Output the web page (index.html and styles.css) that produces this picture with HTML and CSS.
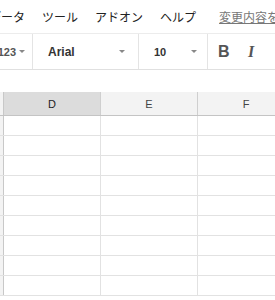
FILE: index.html
```html
<!DOCTYPE html>
<html lang="ja">
<head>
  <meta charset="UTF-8" />
  <title>スプレッドシート</title>
  <link rel="stylesheet" href="styles.css">
</head>
<body>
  <div class="menubar">
    <span class="menu-item">データ</span>
    <span class="menu-item">ツール</span>
    <span class="menu-item">アドオン</span>
    <span class="menu-item">ヘルプ</span>
    <span class="save-note">変更内容をすべてドライブに保存しました</span>
  </div>

  <div class="toolbar">
    <div class="tool tool-format">123 <span class="caret"></span></div>
    <div class="tool tool-font">Arial <span class="caret"></span></div>
    <div class="tool tool-size">10 <span class="caret"></span></div>
    <div class="tool tool-style">
      <span class="btn-bold">B</span>
      <span class="btn-italic">I</span>
    </div>
  </div>

  <div class="formula-bar"></div>

  <div class="sheet">
    <div class="row header-row">
      <div class="cell corner"></div>
      <div class="cell col-head selected">D</div>
      <div class="cell col-head">E</div>
      <div class="cell col-head">F</div>
    </div>
    <div class="row"><div class="cell corner"></div><div class="cell"></div><div class="cell"></div><div class="cell"></div></div>
    <div class="row"><div class="cell corner"></div><div class="cell"></div><div class="cell"></div><div class="cell"></div></div>
    <div class="row"><div class="cell corner"></div><div class="cell"></div><div class="cell"></div><div class="cell"></div></div>
    <div class="row"><div class="cell corner"></div><div class="cell"></div><div class="cell"></div><div class="cell"></div></div>
    <div class="row"><div class="cell corner"></div><div class="cell"></div><div class="cell"></div><div class="cell"></div></div>
    <div class="row"><div class="cell corner"></div><div class="cell"></div><div class="cell"></div><div class="cell"></div></div>
    <div class="row"><div class="cell corner"></div><div class="cell"></div><div class="cell"></div><div class="cell"></div></div>
    <div class="row"><div class="cell corner"></div><div class="cell"></div><div class="cell"></div><div class="cell"></div></div>
    <div class="row"><div class="cell corner"></div><div class="cell"></div><div class="cell"></div><div class="cell"></div></div>
  </div>
</body>
</html>
```

FILE: styles.css
```css
body {
  margin: 0;
  padding: 0;
  background: #fff;
  color: #222;
  font-family: "Liberation Sans", "Noto Sans CJK JP", sans-serif;
  overflow: hidden;
  width: 275px;
  height: 300px;
}

.menubar {
  height: 33px;
  display: flex;
  align-items: center;
  white-space: nowrap;
  margin-left: -11px;
  font-family: "Noto Sans CJK JP", sans-serif;
  font-size: 12px;
  color: #222;
}

.menu-item {
  margin-right: 17px;
}

.save-note {
  margin-left: 6px;
  color: #777;
  text-decoration: underline;
}

.toolbar {
  height: 35px;
  display: flex;
  border-top: 1px solid #ececec;
  border-bottom: 1px solid #e0e0e0;
  background: #fff;
  font-size: 12px;
  color: #444;
}

.tool {
  display: flex;
  align-items: center;
  border-right: 1px solid #e4e4e4;
}

.tool-format {
  width: 32px;
  margin-left: -7px;
  justify-content: flex-end;
  padding-right: 7px;
  font-weight: bold;
  font-size: 11px;
  color: #555;
}

.tool-font {
  box-sizing: border-box;
  width: 106px;
  padding-left: 15px;
  font-weight: bold;
  color: #333;
}

.tool-font .caret {
  margin-left: auto;
  margin-right: 13px;
}

.tool-size {
  width: 69px;
  box-sizing: border-box;
  padding-left: 15px;
  font-size: 11px;
  font-weight: bold;
  color: #333;
}

.tool-size .caret {
  margin-left: auto;
  margin-right: 10px;
}

.tool-format .caret {
  margin-left: 3px;
}

.caret {
  width: 0;
  height: 0;
  border-left: 3px solid transparent;
  border-right: 3px solid transparent;
  border-top: 3px solid #888;
}

.tool-style {
  border-right: none;
  padding-left: 10px;
  font-size: 16px;
  font-weight: bold;
  color: #555;
}

.btn-bold {
  width: 12px;
}

.btn-italic {
  margin-left: 18px;
  font-family: "Liberation Serif", serif;
  font-style: italic;
  font-size: 16px;
  text-decoration: underline;
  text-decoration-thickness: 2px;
  text-underline-offset: -1px;
}

.formula-bar {
  height: 22px;
}

.sheet {
  display: flex;
  flex-direction: column;
}

.row {
  display: flex;
  box-sizing: border-box;
  height: 20px;
  border-bottom: 1px solid #e2e2e2;
}

.header-row {
  height: 24px;
  border-bottom: 1px solid #c4c4c4;
}

.cell {
  width: 97px;
  border-right: 1px solid #e2e2e2;
  box-sizing: border-box;
  flex-shrink: 0;
}

.corner {
  width: 4px;
  background: #f3f3f3;
  border-right: 1px solid #c8c8c8;
}

.col-head {
  background: #f3f3f3;
  display: flex;
  align-items: center;
  justify-content: center;
  font-size: 11px;
  color: #444;
  border-right: 1px solid #cfcfcf;
}

.col-head.selected {
  background: #dcdcdc;
  color: #222;
}
```
